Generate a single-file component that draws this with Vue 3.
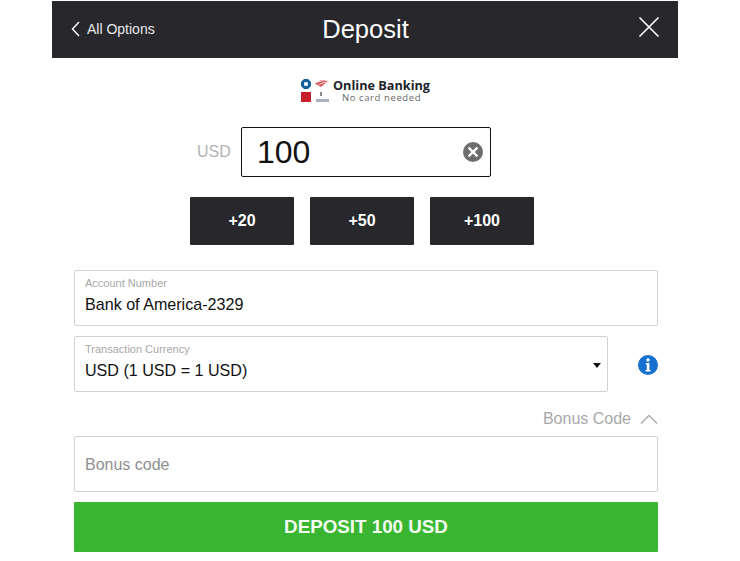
<template>
  <div class="panel">
    <header class="head">
      <div class="back">
        <svg width="9" height="16" viewBox="0 0 9 16"><path d="M8 1 1.5 8 8 15" fill="none" stroke="#fff" stroke-width="1.4" /></svg>
        <span>All Options</span>
      </div>
      <div class="title">Deposit</div>
      <svg class="close" width="22" height="22" viewBox="0 0 22 22"><path d="M1.5 1.5 20.5 20.5M20.5 1.5 1.5 20.5" stroke="#fff" stroke-width="1.6" fill="none" /></svg>
    </header>

    <div class="method">
      <svg class="logos" width="31" height="26" viewBox="0 0 31 26">
        <path d="M4 1h4l3 3v4l-3 3H4L1 8V4z" fill="#14609f" />
        <rect x="4.2" y="4.2" width="3.6" height="3.6" fill="#fff" />
        <path d="M15 5.5 21 2 28 3 21 9Z" fill="#d9555f" />
        <path d="M17 4.2 23 2.5M19 6.5 26 3.7" stroke="#fff" stroke-width="0.8" />
        <rect x="1" y="14" width="10" height="10" fill="#c8202a" />
        <rect x="20" y="14" width="2" height="4" fill="#888" />
        <rect x="16" y="21" width="13" height="3" fill="#a9b3bd" />
      </svg>
      <div class="method-text">
        <div class="method-name">Online Banking</div>
        <div class="method-sub">No card needed</div>
      </div>
    </div>

    <div class="amount-row">
      <span class="cur">USD</span>
      <div class="amount">
        <span class="amount-val">100</span>
        <svg width="20" height="20" viewBox="0 0 20 20">
          <circle cx="10" cy="10" r="10" fill="#6e6e6e" />
          <path d="M5.6 5.6 14.4 14.4M14.4 5.6 5.6 14.4" stroke="#fff" stroke-width="2.2" />
        </svg>
      </div>
    </div>

    <div class="quick">
      <button v-for="q in quick" :key="q" class="quick-btn">+{{ q }}</button>
    </div>

    <div class="form">
      <div class="field">
        <label>Account Number</label>
        <div class="val">Bank of America-2329</div>
      </div>

      <div class="select-row">
        <div class="field select">
          <label>Transaction Currency</label>
          <div class="val">USD (1 USD = 1 USD)</div>
          <i class="caret"></i>
        </div>
        <svg class="info" width="20" height="20" viewBox="0 0 20 20">
          <circle cx="10" cy="10" r="10" fill="#1570d0" />
          <circle cx="10" cy="5" r="1.7" fill="#fff" />
          <path d="M7.8 8h3.6v7h1.2v1.5H7.6V15h1.2V9.5h-1z" fill="#fff" />
        </svg>
      </div>

      <div class="bonus-toggle">
        <span>Bonus Code</span>
        <svg width="18" height="10" viewBox="0 0 18 10"><path d="M1 9.5 9 1.5 17 9.5" fill="none" stroke="#a8a8a8" stroke-width="1.3" /></svg>
      </div>

      <div class="field bonus">Bonus code</div>
      <button class="submit">DEPOSIT 100 USD</button>
    </div>
  </div>
</template>

<script setup>
const quick = [20, 50, 100]
</script>

<style>
html, body { background: #fff; }
</style>

<style scoped>
.panel {
  width: 626px;
  height: 561px;
  margin-left: 52px;
  padding-top: 1px;
  box-sizing: border-box;
  font-family: "Liberation Sans", Arial, sans-serif;
  overflow: hidden;
}
.head {
  height: 57px;
  background: #27272c;
  color: #fff;
  position: relative;
  display: flex;
  align-items: center;
  justify-content: center;
}
.back {
  position: absolute;
  left: 19px;
  top: 20px;
  display: flex;
  align-items: center;
  gap: 7px;
  font-size: 14px;
  color: #e8e8e8;
}
.title { font-size: 25.5px; margin: -1px 0 0 1px; }
.close { position: absolute; right: 18px; top: 15px; }

.method {
  height: 69px;
  display: flex;
  align-items: center;
  justify-content: center;
  gap: 2px;
  box-sizing: border-box;
  padding: 0 0 4px 0;
}
.method-text { text-align: center; font-family: "Open Sans", sans-serif; }
.method-name { font-size: 12.7px; font-weight: 700; color: #20232b; line-height: 14px; }
.method-sub { font-size: 9.5px; letter-spacing: 0.6px; color: #6a6a6a; line-height: 11px; }

.amount-row {
  display: flex;
  align-items: center;
  margin-left: 145px;
}
.cur { font-size: 16px; color: #b4b4b4; width: 44px; }
.amount {
  width: 250px;
  height: 50px;
  box-sizing: border-box;
  border: 1px solid #111;
  border-radius: 2px;
  display: flex;
  align-items: center;
  justify-content: space-between;
  padding: 0 7px 0 15px;
  font-size: 32px;
  color: #111;
}
.amount-val { margin-top: 1px; }

.quick {
  display: flex;
  gap: 16px;
  margin: 20px 0 0 138px;
}
.quick-btn {
  width: 104px;
  height: 48px;
  background: #27272c;
  color: #fff;
  border: none;
  border-radius: 1px;
  font: 700 16px "Liberation Sans", Arial, sans-serif;
}

.form {
  margin: 25px 20px 0 22px;
  display: flex;
  flex-direction: column;
}
.field {
  position: relative;
  height: 56px;
  box-sizing: border-box;
  border: 1px solid #d2d2d2;
  border-radius: 2px;
  padding: 6px 10px 0;
}
.field label {
  display: block;
  font-size: 11px;
  line-height: 13px;
  color: #a8a8a8;
}
.val {
  font-size: 16.1px;
  line-height: 20px;
  margin-top: 4px;
  color: #111;
}
.select-row {
  display: flex;
  align-items: center;
  margin-top: 10px;
}
.select { width: 534px; }
.caret {
  position: absolute;
  right: 6px;
  top: 26px;
  border-left: 4px solid transparent;
  border-right: 4px solid transparent;
  border-top: 5px solid #111;
}
.info { margin-left: 30px; margin-top: 1px; }
.bonus-toggle {
  display: flex;
  justify-content: flex-end;
  align-items: center;
  gap: 9px;
  height: 44px;
  padding-top: 9px;
  box-sizing: border-box;
  font-size: 16px;
  color: #a8a8a8;
}
.bonus {
  font-size: 16px;
  color: #8f8f8f;
  display: flex;
  align-items: center;
  padding: 2px 10px 0;
}
.submit {
  margin-top: 10px;
  height: 50px;
  background: #3ab532;
  color: #f2fdf0;
  border: none;
  border-radius: 1px;
  font: 700 18.8px "Liberation Sans", Arial, sans-serif;
}
</style>
